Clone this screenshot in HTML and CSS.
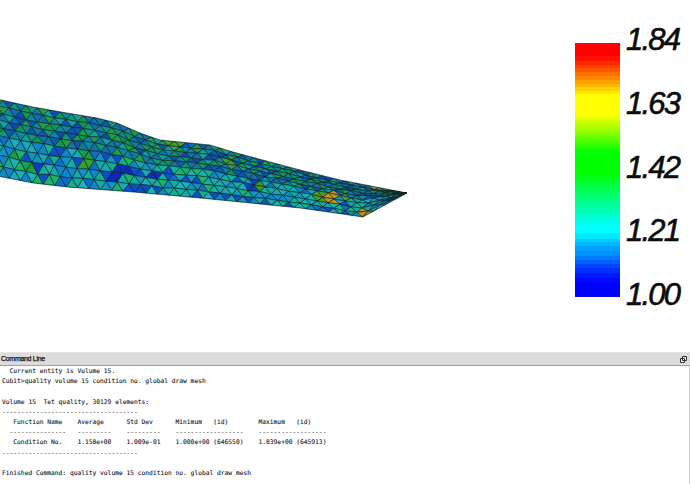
FILE: index.html
```html
<!DOCTYPE html>
<html lang="en">
<head>
<meta charset="utf-8">
<title>Cubit</title>
<link rel="stylesheet" href="styles.css">
</head>
<body>
<div class="app">
  <main class="viewport">
    <svg id="mesh" class="mesh" width="560" height="349" viewBox="0 0 560 349" aria-label="Tetrahedral mesh"></svg>
    <div class="legend">
      <div class="colorbar"></div>
      <div class="ticks">
        <span>1.84</span>
        <span>1.63</span>
        <span>1.42</span>
        <span>1.21</span>
        <span>1.00</span>
      </div>
    </div>
  </main>
  <section class="panel">
    <header class="panel-head">
      <span class="panel-title">Command Line</span>
      <svg class="float-icon" width="7" height="7" viewBox="0 0 7 7"><path d="M2.5.5h4v4h-4z M.5 2.5h4v4h-4z" fill="#eee" stroke="#333" stroke-width="1"/></svg>
    </header>
    <pre class="console">  Current entity is Volume 15.
Cubit&gt;quality volume 15 condition no. global draw mesh

Volume 15  Tet quality, 30129 elements:
------------------------------------
   Function Name    Average      Std Dev      Minimum   (id)        Maximum   (id)
  ---------------   ---------    ---------    ------------------    ------------------
   Condition No.    1.158e+00    1.009e-01    1.000e+00 (646550)    1.839e+00 (645913)
------------------------------------

Finished Command: quality volume 15 condition no. global draw mesh</pre>
  </section>
</div>
<script src="mesh.js"></script>
</body>
</html>
```
FILE: styles.css
```css
html, body { margin: 0; padding: 0; background: #fff; }
.app { width: 690px; height: 484px; display: flex; flex-direction: column; overflow: hidden; }
.viewport { flex: 0 0 349px; display: flex; background: #fff; }
.mesh { flex: 0 0 560px; display: block; }
.legend { flex: 1; display: flex; padding: 28px 0 0 15px; gap: 6px; height: 280px; }
.colorbar {
  width: 45px; height: 254px; margin-top: 15px;
  background: linear-gradient(to bottom,
    #ff0000 0 5%, #ff1000 5% 7%, #ff2800 7% 8.5%, #ff4000 8.5% 10%, #ff5800 10% 11.5%, #ff7000 11.5% 13%,
    #ff8800 13% 14.5%, #ffa000 14.5% 16%, #ffb800 16% 17.5%, #ffd000 17.5% 19%, #ffe800 19% 20%,
    #ffff00 20%, #ffff00 28%, #a0ff00 34%, #00ff00 43%, #00ff00 51%, #00ff60 59%, #00ffc0 67%, #00ffff 72%, #00ffff 75%,
    #00e8ff 75% 77%, #00d0ff 77% 78.5%, #00b8ff 78.5% 80%, #00a0ff 80% 82%, #0090ff 82% 84%, #0078ff 84% 85.5%,
    #0060ff 85.5% 87%, #0048ff 87% 88.5%, #0030ff 88.5% 90.5%, #0018ff 90.5% 92.5%, #0008ff 92.5% 94.5%, #0000ff 94.5% 100%);
}
.ticks { display: flex; flex-direction: column; justify-content: space-between; height: 278px;
  font: italic 400 31px/23px "Liberation Sans", sans-serif; letter-spacing: -1.8px; color: #0c0c0c; -webkit-text-stroke: .6px #0c0c0c; }
.panel { flex: 1; display: flex; flex-direction: column; min-height: 0; }
.panel-head { margin-top: 3px; height: 12px; display: flex; align-items: center; justify-content: space-between; padding: 0 3px 0 1px;
  background: #dcdcdc; border-top: 1px solid #e4e4e4; border-bottom: 1px solid #a0a0a0; }
.panel-title { font: 400 7px/12px "Liberation Sans", sans-serif; letter-spacing: -.3px; color: #111; -webkit-text-stroke: .25px #111; }
.float-icon { display: block; }
.console { margin: 0; padding: 0 0 0 2px; flex: 1; border-right: 1px solid #ccc;
  font: 6.27px/10.2px "DejaVu Sans Mono", monospace; color: #1a2530; -webkit-text-stroke: .12px #1a2530; white-space: pre; }
```
FILE: mesh.js
```js
(function () {
  var svg = document.getElementById('mesh');
  var NS = 'http://www.w3.org/2000/svg';
  var top = [[-8,98],[33,107],[67,113],[97,118],[117,123],[140,133],[160,140],[210,145],[233,152],[300,170],[340,180],[407,193]];
  var bot = [[-8,175],[33,183],[67,187],[133,192],[200,198],[300,208],[363,217]];
  function interp(line, x) {
    for (var i = 0; i < line.length - 1; i++) {
      if (x <= line[i + 1][0]) {
        var t = (x - line[i][0]) / (line[i + 1][0] - line[i][0]);
        return line[i][1] + t * (line[i + 1][1] - line[i][1]);
      }
    }
    return line[line.length - 1][1];
  }
  function botY(x) {
    if (x <= 363) return interp(bot, x);
    return 217 + (x - 363) / 44 * -24;
  }
  var seed = 11;
  function rnd() { seed = (seed * 16807) % 2147483647; return seed / 2147483647; }
  var fr = [0, .09, .18, .27, .36, .47, .6, .73, .87, 1];
  var step = 11.4;
  var hot = [
    [332,197,'#d09410'],[365,215,'#c98a10'],[379,187,'#b8a818'],[392,190,'#a8a820'],[403,193,'#b08a20'],
    [320,196,'#4d9e20'],[346,198,'#48a030'],[260,186,'#3f9a20'],[231,161,'#3f9a30'],[85,158,'#1f9a40'],
    [14,155,'#18a040'],[28,167,'#19a040'],[172,140,'#48a030'],[176,143,'#48a030'],[86,166,'#38a030'],
    [122,172,'#0a2cc0'],[154,175,'#0a30b8'],[42,165,'#0a40c0'],[145,188,'#0a50b8'],[254,186,'#0a40c0'],[128,170,'#0a28c0'],[116,176,'#0a28c0']
  ];
  var cy0 = 0;
  function color(cx, f) {
    for (var h = 0; h < hot.length; h++) {
      var dx = hot[h][0] - cx, dy = hot[h][1] - cy0;
      if (dx * dx + dy * dy < 30) return hot[h][2];
    }
    var pal = f < .47
      ? ['#0c6fb0','#1178a4','#0b58b4','#0d88a0','#12a0a0','#109878','#12984e','#1fa040','#0a4cb0','#1a70a0']
      : ['#18aab8','#1cb0b8','#1094c4','#10b0a0','#0a70cc','#0a50c8','#14b08c','#18b468','#0c88cc','#18a8a8'];
    return pal[Math.floor(rnd() * pal.length)];
  }
  var cols = Math.ceil(416 / step) + 1;
  var grid = [];
  for (var r = 0; r < fr.length; r++) {
    grid[r] = [];
    for (var c = 0; c <= cols; c++) {
      var x = c * step + (r % 2 ? step / 2 : 0) - 8;
      var t = interp(top, x), b = botY(x);
      var inner = r > 0 && r < fr.length - 1;
      grid[r][c] = [x + (inner ? (rnd() - .5) * 1.2 : 0), t + (b - t) * fr[r] + (inner ? (rnd() - .5) * 1.4 : 0)];
    }
  }
  var defs = document.createElementNS(NS, 'defs');
  var clip = document.createElementNS(NS, 'clipPath');
  clip.id = 'meshclip';
  var outline = document.createElementNS(NS, 'polygon');
  outline.setAttribute('points', top.concat(bot.slice().reverse()).map(function (p) { return p.join(','); }).join(' '));
  clip.appendChild(outline); defs.appendChild(clip); svg.appendChild(defs);
  var g = document.createElementNS(NS, 'g');
  g.setAttribute('clip-path', 'url(#meshclip)');
  g.setAttribute('stroke', '#06222a');
  g.setAttribute('stroke-width', '.65');
  g.setAttribute('stroke-linejoin', 'round');
  svg.appendChild(g);
  function tri(a, b, c, f) {
    cy0 = (a[1] + b[1] + c[1]) / 3;
    var p = document.createElementNS(NS, 'polygon');
    p.setAttribute('points', [a, b, c].map(function (q) { return q[0].toFixed(1) + ',' + q[1].toFixed(1); }).join(' '));
    p.setAttribute('fill', color((a[0] + b[0] + c[0]) / 3, f));
    g.appendChild(p);
  }
  for (var r2 = 0; r2 < fr.length - 1; r2++) {
    var f = (fr[r2] + fr[r2 + 1]) / 2;
    var A = grid[r2], B = grid[r2 + 1];
    for (var c2 = 0; c2 < cols; c2++) {
      if (r2 % 2 === 0) {
        tri(A[c2], A[c2 + 1], B[c2], f);
        tri(A[c2 + 1], B[c2 + 1], B[c2], f);
      } else {
        tri(A[c2], B[c2], B[c2 + 1], f);
        tri(A[c2], A[c2 + 1], B[c2 + 1], f);
      }
    }
  }
  var edge = document.createElementNS(NS, 'polygon');
  edge.setAttribute('points', outline.getAttribute('points'));
  edge.setAttribute('fill', 'none');
  edge.setAttribute('stroke', '#06222a');
  edge.setAttribute('stroke-width', '.6');
  svg.appendChild(edge);
})();
```
